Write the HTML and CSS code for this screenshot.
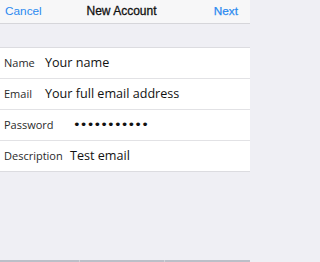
FILE: index.html
```html
<!DOCTYPE html>
<html>
<head>
<meta charset="utf-8">
<link rel="stylesheet" href="styles.css">
</head>
<body>
<div class="screen">
  <div class="nav">
    <span class="nav-btn">Cancel</span>
    <span class="nav-title">New Account</span>
    <span class="nav-btn nav-next">Next</span>
  </div>
  <div class="band"></div>
  <div class="form">
    <div class="row"><span class="label w-name">Name</span><span class="value">Your name</span></div>
    <div class="row"><span class="label w-name">Email</span><span class="value">Your full email address</span></div>
    <div class="row"><span class="label w-pass">Password</span><span class="value dots">•••••••••••</span></div>
    <div class="row"><span class="label w-desc">Description</span><span class="value">Test email</span></div>
  </div>
  <div class="fill"></div>
  <div class="keys">
    <div class="key k1"></div>
    <div class="key k2"></div>
    <div class="key k3"></div>
  </div>
</div>
</body>
</html>
```
FILE: styles.css
```css
html, body { margin: 0; padding: 0; }
body { width: 250px; height: 262px; overflow: hidden; background: #efeff4; }
.screen { display: flex; flex-direction: column; height: 262px; }
.nav {
  height: 21px; border-bottom: 1px solid #d6d6da; background: #f7f7f8;
  display: grid; grid-template-columns: 1fr auto 1fr; align-items: center;
  padding: 0 12px 2px 5px;
  font-family: "Liberation Sans", Arial, sans-serif; font-size: 11.8px;
}
.nav-btn { color: #2b8af0; }
.nav-next { justify-self: end; font-size: 11.8px; -webkit-text-stroke: 0.25px #2b8af0; }
.nav-title { color: #111; font-size: 12px; -webkit-text-stroke: 0.3px #111; }
.band { height: 23px; }
.form { background: #fff; border-top: 1px solid #dcdce0; border-bottom: 1px solid #dcdce0; }
.row {
  height: 29px; display: flex; align-items: center; padding: 0 0 1px 4px;
  border-bottom: 1px solid #e2e2e5;
}
.row:last-child { border-bottom: none; }
.label { font-family: "Open Sans", sans-serif; font-size: 11px; color: #2a2a2a; }
.w-name { width: 41px; }
.w-pass { width: 69px; }
.w-desc { width: 66px; }
.value { font-family: "Open Sans", sans-serif; font-size: 12.6px; color: #111; }
.dots { font-family: "DejaVu Sans", sans-serif; font-size: 13px; letter-spacing: -0.85px; }
.fill { flex: 1; }
.keys { height: 2px; display: flex; gap: 1px; background: #d2d5da; }
.key { background: #bbbfc8; }
.k1 { width: 79px; }
.k2 { width: 84px; }
.k3 { flex: 1; }
```
